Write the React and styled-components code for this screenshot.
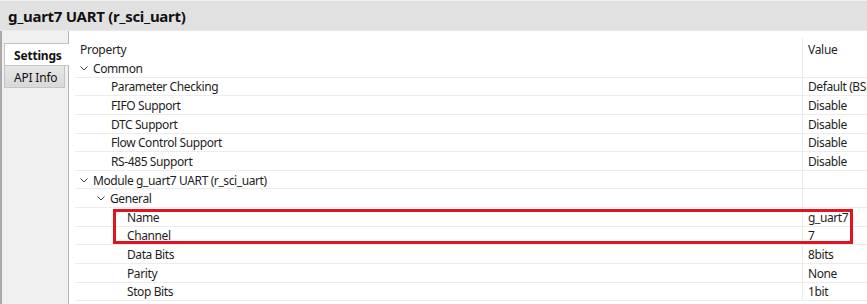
import React from 'react';
import styled, { createGlobalStyle } from 'styled-components';

const Global = createGlobalStyle`
    html, body {
        margin: 0;
        padding: 0;
        background: #ffffff;
    }
    body {
        font-family: "Noto Sans", "Open Sans", sans-serif;
        color: #1e1e1e;
    }
`

const Page = styled.div`
    position: relative;
    width: 867px;
    height: 304px;
    overflow: hidden;
    background: #ffffff;
`

const TitleBar = styled.div`
    height: 31px;
    box-sizing: border-box;
    background: #e1e1e1;
    border-top: 1px solid #f2f2f2;
    border-bottom: 1px solid #e9e9e9;
    padding-left: 8px;
    display: flex;
    align-items: center;
    font-size: 15px;
    font-weight: 700;
    letter-spacing: -0.3px;
    color: #111;
`

const Body = styled.div`
    display: flex;
    height: 273px;
`

const Sidebar = styled.div`
    width: 69px;
    flex: none;
    box-sizing: border-box;
    background: #f0f0f0;
    border-left: 2px solid #a9a9a9;
    border-right: 1px solid #b4b4b4;
    padding-top: 12px;
    display: flex;
    flex-direction: column;
    align-items: flex-start;
`

const Tab = styled.div`
    box-sizing: border-box;
    height: ${p => (p.$active ? '23px' : '22px')};
    width: ${p => (p.$active ? '65px' : '61px')};
    margin-left: 2px;
    margin-right: ${p => (p.$active ? '-1px' : '0')};
    padding-left: 9px;
    padding-top: 1px;
    display: flex;
    align-items: center;
    font-size: 12px;
    letter-spacing: -0.2px;
    font-weight: ${p => (p.$active ? 700 : 400)};
    color: #111;
    background: ${p => (p.$active ? '#ffffff' : 'linear-gradient(#e6e6e6, #d9d9d9)')};
    border: 1px solid #c4c4c4;
    border-right: ${p => (p.$active ? 'none' : '1px solid #c4c4c4')};
    border-top: ${p => (p.$active ? '1px solid #c4c4c4' : 'none')};
    position: relative;
    z-index: 1;
`

const Content = styled.div`
    flex: 1;
    padding-left: 6px;
    background: #ffffff;
`

const Table = styled.div`
    display: grid;
    grid-template-columns: 727px 1fr;
`

const HeadCell = styled.div`
    margin-top: 7px;
    height: 21px;
    display: flex;
    align-items: center;
    padding-left: 5px;
    padding-top: 1px;
    box-sizing: border-box;
    font-size: 12px;
    letter-spacing: -0.3px;
    border-left: ${p => (p.$sep ? '1px solid #ececec' : 'none')};
`

const Cell = styled.div`
    box-sizing: border-box;
    height: 18.625px;
    display: flex;
    align-items: center;
    padding-left: ${p => p.$indent}px;
    padding-top: 1px;
    font-size: 12px;
    letter-spacing: -0.4px;
    white-space: nowrap;
    overflow: hidden;
    border-bottom: 1px solid #ececec;
    border-left: ${p => (p.$sep ? '1px solid #ececec' : 'none')};
`

const Chevron = styled.svg`
    width: 8px;
    height: 5px;
    margin-right: 5px;
    flex: none;
`

const Highlight = styled.div`
    position: absolute;
    left: 113px;
    top: 209px;
    width: 740px;
    height: 35px;
    box-sizing: border-box;
    border: 3px solid #e3121f;
    pointer-events: none;
`

const rows = [
    { label: 'Common', indent: 5, group: true, value: '' },
    { label: 'Parameter Checking', indent: 36, value: 'Default (BSP)' },
    { label: 'FIFO Support', indent: 36, value: 'Disable' },
    { label: 'DTC Support', indent: 36, value: 'Disable' },
    { label: 'Flow Control Support', indent: 36, value: 'Disable' },
    { label: 'RS-485 Support', indent: 36, value: 'Disable' },
    { label: 'Module g_uart7 UART (r_sci_uart)', indent: 5, group: true, value: '' },
    { label: 'General', indent: 22, group: true, value: '' },
    { label: 'Name', indent: 52, value: 'g_uart7' },
    { label: 'Channel', indent: 52, value: '7' },
    { label: 'Data Bits', indent: 52, value: '8bits' },
    { label: 'Parity', indent: 52, value: 'None' },
    { label: 'Stop Bits', indent: 52, value: '1bit' },
];

const Down = () => (
    <Chevron viewBox="0 0 8 5">
        <polyline points="0.5,0.5 4,4 7.5,0.5" fill="none" stroke="#444" strokeWidth="1" />
    </Chevron>
)

export default function App() {
    return (
        <Page>
            <Global />
            <TitleBar>g_uart7 UART (r_sci_uart)</TitleBar>
            <Body>
                <Sidebar>
                    <Tab $active>Settings</Tab>
                    <Tab>API Info</Tab>
                </Sidebar>
                <Content>
                    <Table>
                        <HeadCell>Property</HeadCell>
                        <HeadCell $sep>Value</HeadCell>
                        {rows.map((r, i) => (
                            <React.Fragment key={i}>
                                <Cell $indent={r.indent}>
                                    {r.group && <Down />}
                                    {r.label}
                                </Cell>
                                <Cell $indent={5} $sep>{r.value}</Cell>
                            </React.Fragment>
                        ))}
                    </Table>
                </Content>
            </Body>
            <Highlight />
        </Page>
    )
}
